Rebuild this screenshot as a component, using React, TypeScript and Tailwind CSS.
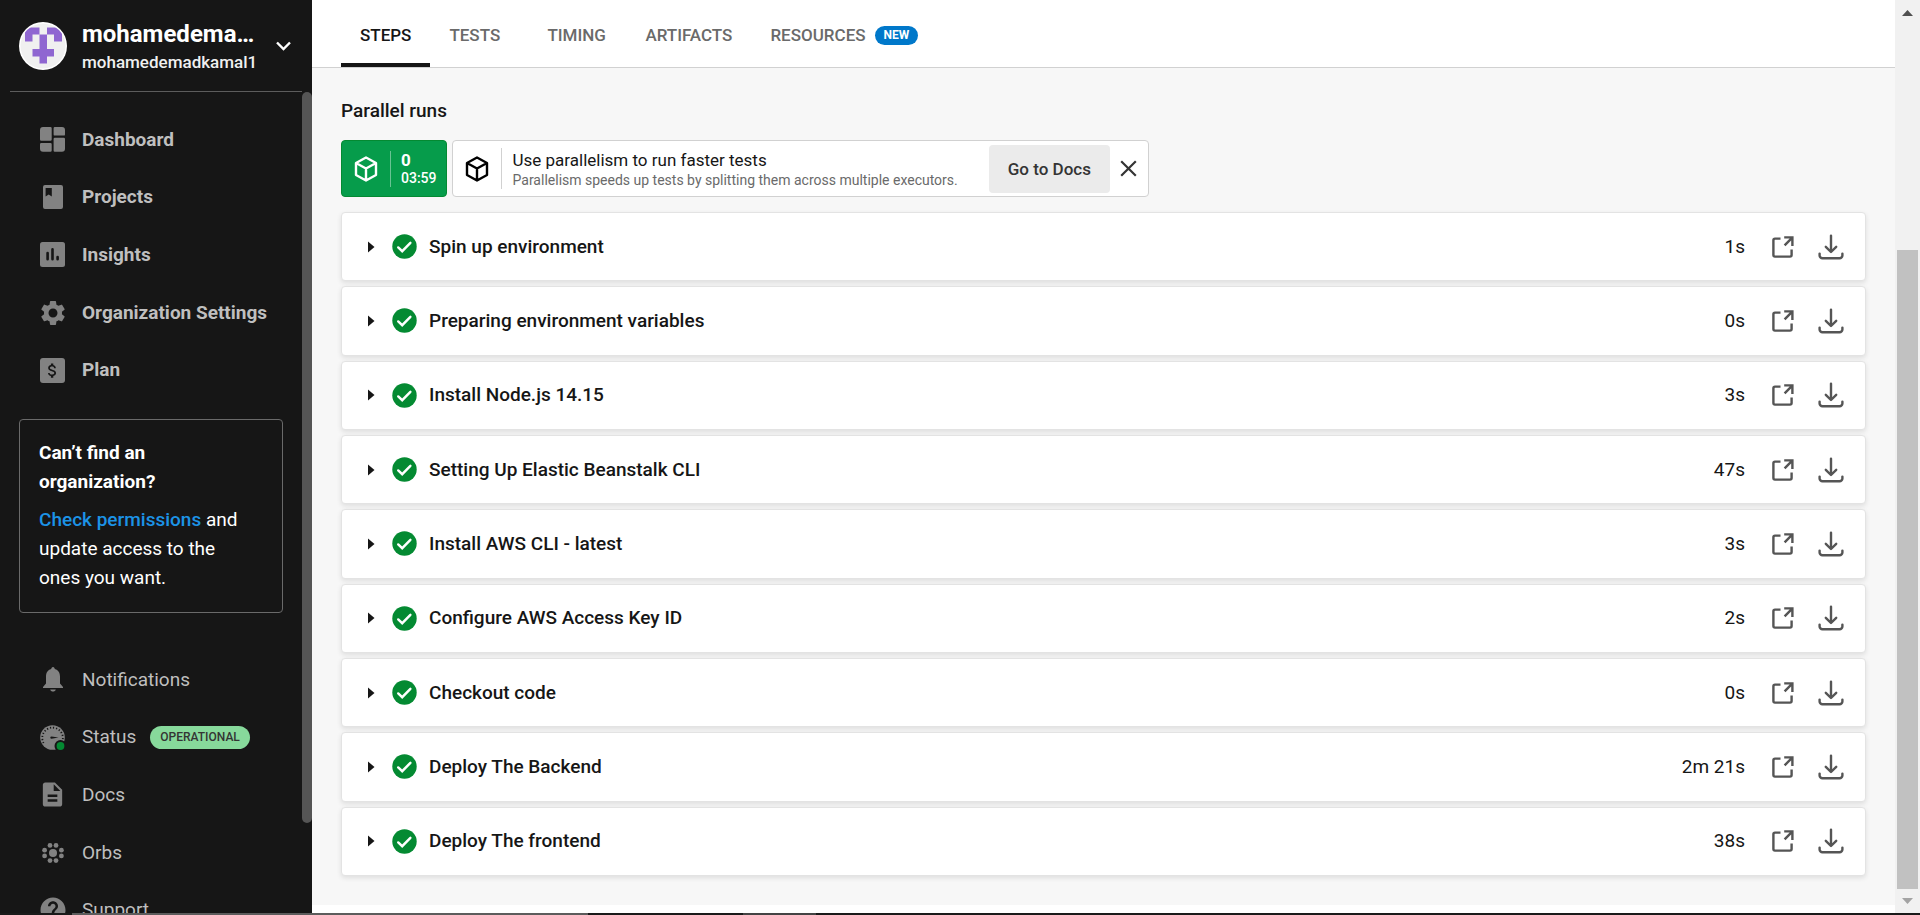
import type { ReactNode } from "react";
import { MdAttachMoney, MdDescription, MdHelp, MdSettings } from "react-icons/md";

type NavItem = { label: string; icon: ReactNode; badge?: string };

const DashboardIcon = () => (
  <svg width="25" height="25" viewBox="0 0 25 25" fill="currentColor">
    <path d="M3 0H10.5A1.2 1.2 0 0 1 11.7 1.2V12.5A1.2 1.2 0 0 1 10.5 13.7H1.2A1.2 1.2 0 0 1 0 12.5V3A3 3 0 0 1 3 0Z" />
    <path d="M1.2 16H10.5A1.2 1.2 0 0 1 11.7 17.2V23.5A1.2 1.2 0 0 1 10.5 24.7H3A3 3 0 0 1 0 21.7V17.2A1.2 1.2 0 0 1 1.2 16Z" />
    <path d="M14.8 0H22A3 3 0 0 1 25 3V7.4A1.2 1.2 0 0 1 23.8 8.6H14.8A1.2 1.2 0 0 1 13.6 7.4V1.2A1.2 1.2 0 0 1 14.8 0Z" />
    <path d="M14.8 10.8H23.8A1.2 1.2 0 0 1 25 12V21.7A3 3 0 0 1 22 24.7H14.8A1.2 1.2 0 0 1 13.6 23.5V12A1.2 1.2 0 0 1 14.8 10.8Z" />
  </svg>
);

const ProjectsIcon = () => (
  <svg width="20" height="24" viewBox="0 0 20 24" fill="currentColor">
    <path
      fillRule="evenodd"
      d="M2 0H18A2 2 0 0 1 20 2V22A2 2 0 0 1 18 24H2A2 2 0 0 1 0 22V2A2 2 0 0 1 2 0ZM2.6 3V11.6L5.7 9.4L8.8 11.6V3Z"
    />
  </svg>
);

const InsightsIcon = () => (
  <svg width="25" height="25" viewBox="0 0 25 25">
    <rect width="25" height="25" rx="2.5" fill="currentColor" />
    <g stroke="#161616" strokeWidth="2.6" strokeLinecap="round">
      <path d="M7.6 11V17.2M12.5 7.4V17.2M17.6 15V17.2" />
    </g>
  </svg>
);

const PlanIcon = () => (
  <span className="grid size-[25px] place-items-center rounded-[3px] bg-[#828282] text-[#161616]">
    <MdAttachMoney size={19} />
  </span>
);

const BellIcon = () => (
  <svg width="20" height="25" viewBox="0 0 20 25" fill="currentColor">
    <path d="M10 0C11.2 0 11.6 1 11.8 2C15.4 3 17 6 17 9.5V16.5L20 20V21H0V20L3 16.5V9.5C3 6 4.6 3 8.2 2C8.4 1 8.8 0 10 0Z" />
    <path d="M7.2 22.6H12.8C12.4 24 11.4 24.6 10 24.6C8.6 24.6 7.6 24 7.2 22.6Z" />
  </svg>
);

const StatusIcon = () => (
  <svg width="25" height="25" viewBox="0 0 25 25">
    <circle cx="12.5" cy="12.5" r="12.3" fill="currentColor" />
    <path
      d="M3.6 18A10.3 10.3 0 1 1 22.4 16"
      fill="none"
      stroke="#161616"
      strokeWidth="1.8"
      strokeDasharray="1.2 1.9"
    />
    <path d="M11.5 11.4L18.5 12.6L11.5 13.8A1.2 1.2 0 0 1 11.5 11.4Z" fill="#161616" />
    <circle cx="20.5" cy="21" r="6" fill="#161616" />
    <circle cx="20.5" cy="21" r="3.9" fill="#048a32" />
  </svg>
);

const OrbsIcon = () => (
  <svg width="22" height="20" viewBox="0 0 22 20" fill="currentColor">
    <circle cx="11" cy="10" r="4" />
    {[
      [8, 2.4],
      [14, 2.4],
      [8, 17.6],
      [14, 17.6],
      [2.6, 7.2],
      [2.6, 12.9],
      [19.4, 7.2],
      [19.4, 12.9],
    ].map(([x, y]) => (
      <circle key={`${x}-${y}`} cx={x} cy={y} r="2.4" />
    ))}
  </svg>
);

const primaryNav: NavItem[] = [
  { label: "Dashboard", icon: <DashboardIcon /> },
  { label: "Projects", icon: <ProjectsIcon /> },
  { label: "Insights", icon: <InsightsIcon /> },
  { label: "Organization Settings", icon: <MdSettings size={30} /> },
  { label: "Plan", icon: <PlanIcon /> },
];

const secondaryNav: NavItem[] = [
  { label: "Notifications", icon: <BellIcon /> },
  { label: "Status", icon: <StatusIcon />, badge: "OPERATIONAL" },
  { label: "Docs", icon: <MdDescription size={29} /> },
  { label: "Orbs", icon: <OrbsIcon /> },
  { label: "Support", icon: <MdHelp size={30} /> },
];

const tabs = ["TESTS", "TIMING", "ARTIFACTS"];

const steps = [
  { name: "Spin up environment", time: "1s" },
  { name: "Preparing environment variables", time: "0s" },
  { name: "Install Node.js 14.15", time: "3s" },
  { name: "Setting Up Elastic Beanstalk CLI", time: "47s" },
  { name: "Install AWS CLI - latest", time: "3s" },
  { name: "Configure AWS Access Key ID", time: "2s" },
  { name: "Checkout code", time: "0s" },
  { name: "Deploy The Backend", time: "2m 21s" },
  { name: "Deploy The frontend", time: "38s" },
];

function NavList({ items, bold }: { items: NavItem[]; bold?: boolean }) {
  return (
    <ul className="grid min-h-72 auto-rows-fr">
      {items.map((item) => (
        <li key={item.label} className="flex">
          <a href="#" className="flex flex-1 items-center pl-9 text-[#828282]">
            <span className="flex w-[33px] justify-center">{item.icon}</span>
            <span
              className={
                bold
                  ? "ml-[13px] text-[19px] leading-6 font-bold text-[#bfbfbf]"
                  : "ml-[13px] text-[19px] leading-6 text-[#bfbfbf]"
              }
            >
              {item.label}
            </span>
            {item.badge && (
              <span className="ml-3.5 rounded-full bg-[#87d99b] px-2.5 text-[12px] leading-[23px] font-medium text-[#343434]">
                {item.badge}
              </span>
            )}
          </a>
        </li>
      ))}
    </ul>
  );
}

function Avatar() {
  return (
    <svg width="48" height="48" viewBox="0 0 48 48">
      <defs>
        <clipPath id="avatar-clip">
          <circle cx="24" cy="24" r="22.5" />
        </clipPath>
      </defs>
      <circle cx="24" cy="24" r="24" fill="#fff" />
      <g clipPath="url(#avatar-clip)">
        <rect width="48" height="48" fill="#f0f0f0" />
        <path
          fill="#8f66d1"
          d="M6 5.5H20.5V12.5H13.5V19.5H6ZM28 5.5H43V19.5H35V12.5H28ZM20.5 12.5H28V27H35V34.5H28V41.5H20.5V34.5H13.5V27H20.5Z"
        />
      </g>
    </svg>
  );
}

function Sidebar() {
  return (
    <aside className="flex w-[312px] shrink-0 flex-col overflow-hidden bg-[#161616]">
      <header className="mx-2.5 flex h-[92px] shrink-0 items-center border-b border-[#5c5c5c] pr-[11px] pl-[9px]">
        <Avatar />
        <div className="ml-[15px] w-[174px] pt-0.5">
          <h1 className="truncate text-[24px] leading-[30px] font-bold text-white">mohamedemadkamal1</h1>
          <p className="text-[17px] leading-[26px] font-medium text-[#f0f0f0]">mohamedemadkamal1</p>
        </div>
        <button type="button" aria-label="Switch organization" className="ml-auto text-white">
          <svg width="15" height="10" viewBox="0 0 15 10" fill="none" stroke="currentColor" strokeWidth="2.4">
            <path d="M1 1.5L7.5 8L14 1.5" />
          </svg>
        </button>
      </header>
      <div className="flex min-h-0 flex-1">
        <div className="min-w-0 flex-1 overflow-hidden pt-[19px]">
          <NavList items={primaryNav} bold />
          <section className="mx-[19px] mt-5 mb-[38px] rounded border border-[#6a6a6a] pt-[18px] pr-9 pb-5 pl-[19px] text-[19px] leading-[29px] text-white">
            <h2 className="font-bold">Can’t find an organization?</h2>
            <p className="mt-[9px]">
              <a href="#" className="font-medium text-[#1c93e6]">
                Check permissions
              </a>{" "}
              and update access to the ones you want.
            </p>
          </section>
          <NavList items={secondaryNav} />
        </div>
        <div className="mb-[90px] w-2.5 shrink-0 rounded-full bg-[#555]" />
      </div>
    </aside>
  );
}

function Cube() {
  return (
    <svg
      width="24"
      height="26"
      viewBox="0 0 24 26"
      fill="none"
      stroke="currentColor"
      strokeWidth="2.4"
      strokeLinejoin="round"
      className="shrink-0"
    >
      <path d="M12 1.5L22 7V19L12 24.5L2 19V7ZM2 7L12 12.5L22 7M12 12.5V24.5" />
    </svg>
  );
}

function StepCard({ name, time }: { name: string; time: string }) {
  return (
    <li className="flex items-center rounded border border-[#e3e3e3] bg-white pr-[21px] pl-[25px] shadow-[0_2px_5px_rgba(0,0,0,0.1)]">
      <button type="button" className="flex items-center text-[19px] leading-6 font-medium text-[#161616]">
        <svg width="8" height="12" viewBox="0 0 8 12" fill="currentColor">
          <path d="M1 0.5L7.5 6L1 11.5Z" />
        </svg>
        <svg width="25" height="25" viewBox="0 0 25 25" className="ml-[17px]">
          <circle cx="12.5" cy="12.5" r="12.2" fill="#048a32" />
          <path
            d="M6.2 13.4L10.2 17.2L18.4 8.8"
            fill="none"
            stroke="#fff"
            strokeWidth="2.4"
            strokeLinecap="round"
          />
        </svg>
        <span className="ml-3">{name}</span>
      </button>
      <span className="ml-auto text-[19px] leading-6 text-[#161616]">{time}</span>
      <button type="button" aria-label={`Open ${name} in new tab`} className="ml-[27px] text-[#555]">
        <svg width="22" height="22" viewBox="0 0 22 22" fill="none" stroke="currentColor" strokeWidth="2.4">
          <path d="M8.5 2.6H3A1.6 1.6 0 0 0 1.4 4.2V19A1.6 1.6 0 0 0 3 20.6H18A1.6 1.6 0 0 0 19.6 19V13.6" />
          <path d="M12.2 1.4H20.4V10M20 1.8L12.6 9.4" />
        </svg>
      </button>
      <button type="button" aria-label={`Download ${name} output`} className="ml-6 text-[#555]">
        <svg
          width="26"
          height="26"
          viewBox="0 0 26 26"
          fill="none"
          stroke="currentColor"
          strokeWidth="2.4"
          strokeLinecap="round"
          strokeLinejoin="round"
        >
          <path d="M13 1.6V17.6M7.8 12.8L13 18L18.2 12.8" />
          <path d="M1.6 19.6V21.4A2.8 2.8 0 0 0 4.4 24.2H21.6A2.8 2.8 0 0 0 24.4 21.4V19.6" />
        </svg>
      </button>
    </li>
  );
}

function PageScrollbar() {
  return (
    <div className="flex w-[25px] shrink-0 flex-col items-center bg-[#f1f1f1]">
      <svg width="11" height="24" viewBox="0 0 11 24" fill="#505050">
        <path d="M0 16L5.5 10L11 16Z" />
      </svg>
      <div className="mt-auto h-[639px] w-[21px] bg-[#c1c1c1]" />
      <svg width="11" height="24" viewBox="0 0 11 24" fill="#a3a3a3">
        <path d="M0 9L5.5 15L11 9Z" />
      </svg>
    </div>
  );
}

export default function App() {
  return (
    <div className="flex h-screen flex-col overflow-hidden bg-white font-[Roboto,sans-serif]">
      <div className="flex min-h-0 flex-1">
        <Sidebar />
        <main className="flex min-w-0 flex-1 flex-col">
          <nav className="flex h-[68px] shrink-0 border-b border-[#d1d1d1] pl-[29px] text-[17px] font-medium text-[#6a6a6a]">
            <a href="#" className="flex items-center border-b-4 border-[#161616] px-[19px] pt-2 text-[#161616]">
              STEPS
            </a>
            {tabs.map((tab) => (
              <a
                key={tab}
                href="#"
                className="flex min-w-[98px] items-center border-b-4 border-transparent px-[19px] pt-2"
              >
                {tab}
              </a>
            ))}
            <a href="#" className="flex items-center border-b-4 border-transparent px-[19px] pt-2">
              RESOURCES
              <span className="ml-[9px] rounded-full bg-[#0078ca] px-[9px] text-[12px] leading-[19px] font-bold text-white">
                NEW
              </span>
            </a>
          </nav>
          <section className="flex-1 bg-[#f7f7f7] px-[29px] pt-[31px] pb-[29px]">
            <h2 className="text-[19px] leading-6 font-medium text-[#161616]">Parallel runs</h2>
            <div className="mt-[17px] flex h-[57px] gap-[5px]">
              <button
                type="button"
                className="flex items-center rounded-sm border border-[#048a32] bg-[#069c4b] pr-[9px] pl-3 text-left text-white"
              >
                <Cube />
                <span className="ml-3 border-l border-white/40 pl-2.5">
                  <span className="block text-[17px] leading-[18px] font-bold">0</span>
                  <span className="block text-[14px] leading-[18px] font-medium">03:59</span>
                </span>
              </button>
              <div className="flex items-center rounded-sm border border-[#d1d1d1] bg-white pr-[11px] pl-3 text-black">
                <Cube />
                <div className="ml-3 border-l border-[#d1d1d1] pt-0.5 pl-[11px]">
                  <p className="text-[17px] leading-[21px] text-[#161616]">Use parallelism to run faster tests</p>
                  <p className="text-[14px] leading-[18px] text-[#6a6a6a]">
                    Parallelism speeds up tests by splitting them across multiple executors.
                  </p>
                </div>
                <a
                  href="#"
                  className="ml-[31px] rounded bg-[#ebebeb] px-[19px] text-[17px] leading-[48px] font-medium text-[#343434]"
                >
                  Go to Docs
                </a>
                <button type="button" aria-label="Dismiss" className="ml-2.5 text-[#343434]">
                  <svg width="17" height="17" viewBox="0 0 17 17" stroke="currentColor" strokeWidth="2.2">
                    <path d="M1.2 1.2L15.8 15.8M15.8 1.2L1.2 15.8" />
                  </svg>
                </button>
              </div>
            </div>
            <ul className="mt-[15px] grid min-h-[664px] auto-rows-fr gap-[5px]">
              {steps.map((step) => (
                <StepCard key={step.name} name={step.name} time={step.time} />
              ))}
            </ul>
          </section>
          <div className="h-2 shrink-0 bg-white" />
        </main>
        <PageScrollbar />
      </div>
      <div className="flex h-0.5 shrink-0 bg-[#1a1a1a]">
        <div className="ml-[72px] w-[516px] bg-[#5c5c5c]" />
        <div className="ml-[155px] w-[73px] bg-[#444]" />
      </div>
    </div>
  );
}
